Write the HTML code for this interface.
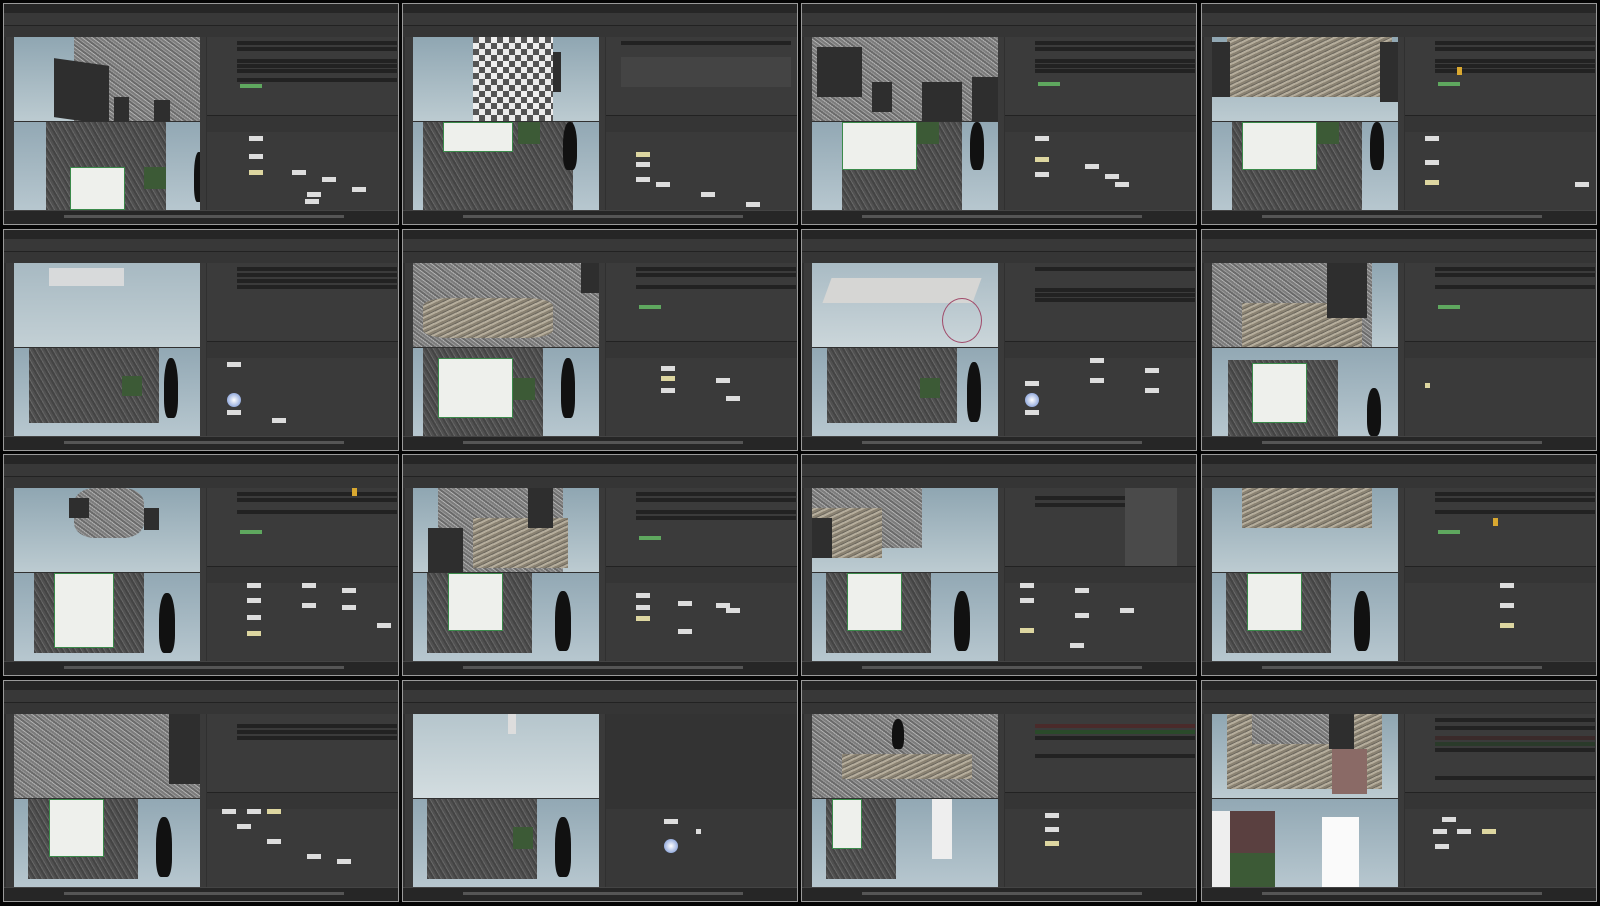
<!DOCTYPE html>
<html><head><meta charset="utf-8">
<style>
*{margin:0;padding:0;box-sizing:border-box}
body{width:1600px;height:906px;background:#050505;position:relative;overflow:hidden;font-family:"Liberation Sans",sans-serif;font-size:4px;color:#ccc}
.c{position:absolute;width:396px;height:222px;background:#303030;border:1px solid #9a9a9a;overflow:hidden}
.c>div{position:absolute}
.tt{left:0;top:0;width:100%;height:9px;background:#262626}
.mn{left:0;top:9px;width:100%;height:13px;background:#383838;border-bottom:1px solid #222}
.tb{left:0;top:22px;width:100%;height:11px;background:#353535}
.lt{left:2px;top:33px;width:8px;height:173px;background:#3a3a3a}
.rt{left:196px;top:33px;width:6px;height:173px;background:#3a3a3a}
.v1{left:10px;top:33px;width:186px;height:84px;background:linear-gradient(#8fa6b2,#bccbd1);overflow:hidden}
.v2{left:10px;top:118px;width:186px;height:88px;background:linear-gradient(#92a8b4,#b7c7cf);overflow:hidden}
.pp{left:203px;top:33px;width:193px;height:78px;background:#3b3b3b}
.nt{left:203px;top:111px;width:193px;height:17px;background:#353535;border-top:1px solid #222}
.ng{left:203px;top:128px;width:193px;height:78px;background:#3a3a3a}
.tl{left:0;top:206px;width:100%;height:16px;background:#262626;border-top:1px solid #444}
.tl:after{content:"";position:absolute;left:60px;top:4px;width:280px;height:3px;background:#555}
.c i{position:absolute;display:block}
.tx{background:repeating-linear-gradient(37deg,#6a6a6a 0 2px,#9a9a9a 2px 3px,#7c7c7c 3px 5px,#b0b0b0 5px 6px),#888}
.tx2{background:repeating-linear-gradient(-25deg,#8a8272 0 2px,#b5ad9c 2px 4px,#6f6a60 4px 5px),#999}
.dk{background:#2e2e2e}
.atl{background:repeating-linear-gradient(60deg,#444 0 2px,#666 2px 3px,#505050 3px 5px)}
.wh{background:#eef0ec;border:1px solid #3a8a4a}
.gr{background:#3c5a36}
.tree{background:#111;border-radius:45% 45% 30% 30%}
.f{background:#222;height:4px}
.n{background:#ddd;width:14px;height:5px}
.ny{background:#ddd6a0;width:14px;height:5px}
.g{background:#5fa85f;height:4px;width:22px}
</style></head><body>

<!-- template repeated -->
<!-- Row 1 -->
<div class="c" style="left:3px;top:3px">
<div class="tt"></div><div class="mn"></div><div class="tb"></div><div class="lt"></div><div class="rt"></div>
<div class="v1"><i class="tx" style="left:60px;top:0;width:126px;height:84px"></i><i class="dk" style="left:40px;top:25px;width:55px;height:59px;transform:skewY(8deg)"></i><i class="dk" style="left:100px;top:60px;width:15px;height:24px"></i><i class="dk" style="left:140px;top:63px;width:16px;height:21px"></i></div>
<div class="v2"><i class="atl" style="left:32px;top:0;width:120px;height:88px"></i><i class="wh" style="left:56px;top:45px;width:55px;height:43px"></i><i class="gr" style="left:130px;top:45px;width:22px;height:22px"></i><i class="tree" style="left:180px;top:30px;width:10px;height:50px"></i></div>
<div class="pp"><i class="f" style="left:30px;top:4px;width:160px"></i><i class="f" style="left:30px;top:10px;width:160px"></i><i class="f" style="left:30px;top:22px;width:160px"></i><i class="f" style="left:30px;top:27px;width:160px"></i><i class="f" style="left:30px;top:32px;width:160px"></i><i class="f" style="left:30px;top:41px;width:160px"></i><i class="g" style="left:33px;top:47px"></i></div>
<div class="nt"></div>
<div class="ng"><i class="n" style="left:42px;top:4px"></i><i class="n" style="left:42px;top:22px"></i><i class="ny" style="left:42px;top:38px"></i><i class="n" style="left:85px;top:38px"></i><i class="n" style="left:115px;top:45px"></i><i class="n" style="left:100px;top:60px"></i><i class="n" style="left:145px;top:55px"></i><i class="n" style="left:98px;top:67px"></i></div>
<div class="tl"></div></div>

<div class="c" style="left:402px;top:3px">
<div class="tt"></div><div class="mn"></div><div class="tb"></div><div class="lt"></div><div class="rt"></div>
<div class="v1"><i class="tx" style="left:60px;top:0;width:80px;height:84px;background:repeating-conic-gradient(#eee 0 25%,#555 0 50%) 0 0/12px 12px"></i><i class="dk" style="left:140px;top:15px;width:8px;height:40px"></i></div>
<div class="v2"><i class="atl" style="left:10px;top:0;width:150px;height:88px"></i><i class="wh" style="left:30px;top:0;width:70px;height:30px"></i><i class="gr" style="left:105px;top:0;width:22px;height:22px"></i><i class="tree" style="left:150px;top:0;width:14px;height:48px"></i></div>
<div class="pp"><i class="f" style="left:15px;top:4px;width:170px"></i><i class="f" style="left:15px;top:20px;width:170px;height:30px;background:#444"></i></div>
<div class="nt"></div>
<div class="ng"><i class="ny" style="left:30px;top:20px"></i><i class="n" style="left:30px;top:30px"></i><i class="n" style="left:30px;top:45px"></i><i class="n" style="left:50px;top:50px"></i><i class="n" style="left:95px;top:60px"></i><i class="n" style="left:140px;top:70px"></i></div>
<div class="tl"></div></div>

<div class="c" style="left:801px;top:3px">
<div class="tt"></div><div class="mn"></div><div class="tb"></div><div class="lt"></div><div class="rt"></div>
<div class="v1"><i class="tx" style="left:0;top:0;width:186px;height:84px"></i><i class="dk" style="left:5px;top:10px;width:45px;height:50px"></i><i class="dk" style="left:60px;top:45px;width:20px;height:30px"></i><i class="dk" style="left:110px;top:45px;width:40px;height:39px"></i><i class="dk" style="left:160px;top:40px;width:26px;height:44px"></i></div>
<div class="v2"><i class="atl" style="left:30px;top:0;width:120px;height:88px"></i><i class="wh" style="left:30px;top:0;width:75px;height:48px"></i><i class="gr" style="left:105px;top:0;width:22px;height:22px"></i><i class="tree" style="left:158px;top:0;width:14px;height:48px"></i></div>
<div class="pp"><i class="f" style="left:30px;top:4px;width:160px"></i><i class="f" style="left:30px;top:10px;width:160px"></i><i class="f" style="left:30px;top:22px;width:160px"></i><i class="f" style="left:30px;top:27px;width:160px"></i><i class="f" style="left:30px;top:32px;width:160px"></i><i class="g" style="left:33px;top:45px"></i></div>
<div class="nt"></div>
<div class="ng"><i class="n" style="left:30px;top:4px"></i><i class="ny" style="left:30px;top:25px"></i><i class="n" style="left:30px;top:40px"></i><i class="n" style="left:80px;top:32px"></i><i class="n" style="left:100px;top:42px"></i><i class="n" style="left:110px;top:50px"></i></div>
<div class="tl"></div></div>

<div class="c" style="left:1201px;top:3px">
<div class="tt"></div><div class="mn"></div><div class="tb"></div><div class="lt"></div><div class="rt"></div>
<div class="v1"><i class="tx2" style="left:15px;top:0;width:165px;height:60px"></i><i class="dk" style="left:0;top:5px;width:18px;height:55px"></i><i class="dk" style="left:168px;top:5px;width:18px;height:60px"></i></div>
<div class="v2"><i class="atl" style="left:20px;top:0;width:130px;height:88px"></i><i class="wh" style="left:30px;top:0;width:75px;height:48px"></i><i class="gr" style="left:105px;top:0;width:22px;height:22px"></i><i class="tree" style="left:158px;top:0;width:14px;height:48px"></i></div>
<div class="pp"><i class="f" style="left:30px;top:4px;width:160px"></i><i class="f" style="left:30px;top:10px;width:160px"></i><i class="f" style="left:30px;top:22px;width:160px"></i><i class="f" style="left:30px;top:27px;width:160px"></i><i class="f" style="left:30px;top:32px;width:160px"></i><i class="g" style="left:33px;top:45px"></i><i style="left:52px;top:30px;width:5px;height:8px;background:#d9a830"></i></div>
<div class="nt"></div>
<div class="ng"><i class="n" style="left:20px;top:4px"></i><i class="n" style="left:20px;top:28px"></i><i class="ny" style="left:20px;top:48px"></i><i class="n" style="left:170px;top:50px"></i></div>
<div class="tl"></div></div>

<!-- Row 2 -->
<div class="c" style="left:3px;top:229px">
<div class="tt"></div><div class="mn"></div><div class="tb"></div><div class="lt"></div><div class="rt"></div>
<div class="v1" style="background:linear-gradient(#a7b9c2,#c3d0d5)"><i style="left:35px;top:5px;width:75px;height:18px;background:#d8dadb"></i></div>
<div class="v2"><i class="atl" style="left:15px;top:0;width:130px;height:75px"></i><i class="gr" style="left:108px;top:28px;width:20px;height:20px"></i><i class="tree" style="left:150px;top:10px;width:14px;height:60px"></i></div>
<div class="pp"><i class="f" style="left:30px;top:4px;width:160px"></i><i class="f" style="left:30px;top:10px;width:160px"></i><i class="f" style="left:30px;top:16px;width:160px"></i><i class="f" style="left:30px;top:22px;width:160px"></i></div>
<div class="nt"></div>
<div class="ng"><i class="n" style="left:20px;top:4px"></i><i style="left:20px;top:35px;width:14px;height:14px;border-radius:50%;background:radial-gradient(#fff,#6a8ad0)"></i><i class="n" style="left:20px;top:52px"></i><i class="n" style="left:65px;top:60px"></i></div>
<div class="tl"></div></div>

<div class="c" style="left:402px;top:229px">
<div class="tt"></div><div class="mn"></div><div class="tb"></div><div class="lt"></div><div class="rt"></div>
<div class="v1"><i class="tx" style="left:0;top:0;width:186px;height:84px"></i><i class="tx2" style="left:10px;top:35px;width:130px;height:40px;border-radius:20%"></i><i class="dk" style="left:168px;top:0;width:18px;height:30px"></i></div>
<div class="v2"><i class="atl" style="left:10px;top:0;width:120px;height:88px"></i><i class="wh" style="left:25px;top:10px;width:75px;height:60px"></i><i class="gr" style="left:100px;top:30px;width:22px;height:22px"></i><i class="tree" style="left:148px;top:10px;width:14px;height:60px"></i></div>
<div class="pp"><i class="f" style="left:30px;top:4px;width:160px"></i><i class="f" style="left:30px;top:10px;width:160px"></i><i class="f" style="left:30px;top:22px;width:160px"></i><i class="g" style="left:33px;top:42px"></i></div>
<div class="nt"></div>
<div class="ng"><i class="n" style="left:55px;top:8px"></i><i class="ny" style="left:55px;top:18px"></i><i class="n" style="left:55px;top:30px"></i><i class="n" style="left:110px;top:20px"></i><i class="n" style="left:120px;top:38px"></i></div>
<div class="tl"></div></div>

<div class="c" style="left:801px;top:229px">
<div class="tt"></div><div class="mn"></div><div class="tb"></div><div class="lt"></div><div class="rt"></div>
<div class="v1" style="background:linear-gradient(#a9bbc4,#cbd6da)"><i style="left:15px;top:15px;width:150px;height:25px;background:#d6d6d4;transform:skewX(-20deg)"></i><i style="left:130px;top:35px;width:40px;height:45px;border:1px solid #a04a6a;border-radius:50%"></i></div>
<div class="v2"><i class="atl" style="left:15px;top:0;width:130px;height:75px"></i><i class="gr" style="left:108px;top:30px;width:20px;height:20px"></i><i class="tree" style="left:155px;top:14px;width:14px;height:60px"></i></div>
<div class="pp"><i class="f" style="left:30px;top:4px;width:160px"></i><i class="f" style="left:30px;top:25px;width:160px"></i><i class="f" style="left:30px;top:30px;width:160px"></i><i class="f" style="left:30px;top:35px;width:160px"></i></div>
<div class="nt"></div>
<div class="ng"><i class="n" style="left:20px;top:23px"></i><i style="left:20px;top:35px;width:14px;height:14px;border-radius:50%;background:radial-gradient(#fff,#6a8ad0)"></i><i class="n" style="left:20px;top:52px"></i><i class="n" style="left:85px;top:0"></i><i class="n" style="left:85px;top:20px"></i><i class="n" style="left:140px;top:10px"></i><i class="n" style="left:140px;top:30px"></i></div>
<div class="tl"></div></div>

<div class="c" style="left:1201px;top:229px">
<div class="tt"></div><div class="mn"></div><div class="tb"></div><div class="lt"></div><div class="rt"></div>
<div class="v1"><i class="tx" style="left:0;top:0;width:160px;height:84px"></i><i class="tx2" style="left:30px;top:40px;width:120px;height:44px"></i><i class="dk" style="left:115px;top:0;width:40px;height:55px"></i></div>
<div class="v2"><i class="atl" style="left:16px;top:12px;width:110px;height:76px"></i><i class="wh" style="left:40px;top:15px;width:55px;height:60px"></i><i class="tree" style="left:155px;top:40px;width:14px;height:48px"></i></div>
<div class="pp"><i class="f" style="left:30px;top:4px;width:160px"></i><i class="f" style="left:30px;top:10px;width:160px"></i><i class="f" style="left:30px;top:22px;width:160px"></i><i class="g" style="left:33px;top:42px"></i></div>
<div class="nt"></div>
<div class="ng"><i class="ny" style="left:20px;top:25px;width:5px"></i></div>
<div class="tl"></div></div>

<!-- Row 3 -->
<div class="c" style="left:3px;top:454px">
<div class="tt"></div><div class="mn"></div><div class="tb"></div><div class="lt"></div><div class="rt"></div>
<div class="v1"><i class="tx" style="left:60px;top:0;width:70px;height:50px;border-radius:30%"></i><i class="dk" style="left:55px;top:10px;width:20px;height:20px"></i><i class="dk" style="left:130px;top:20px;width:15px;height:22px"></i></div>
<div class="v2"><i class="atl" style="left:20px;top:0;width:110px;height:80px"></i><i class="wh" style="left:40px;top:0;width:60px;height:75px"></i><i class="tree" style="left:145px;top:20px;width:16px;height:60px"></i></div>
<div class="pp"><i class="f" style="left:30px;top:4px;width:160px"></i><i class="f" style="left:30px;top:10px;width:160px"></i><i class="f" style="left:30px;top:22px;width:160px"></i><i class="g" style="left:33px;top:42px"></i><i style="left:145px;top:0;width:5px;height:8px;background:#d9a830"></i></div>
<div class="nt"></div>
<div class="ng"><i class="n" style="left:40px;top:0"></i><i class="n" style="left:40px;top:15px"></i><i class="n" style="left:40px;top:32px"></i><i class="ny" style="left:40px;top:48px"></i><i class="n" style="left:95px;top:0"></i><i class="n" style="left:95px;top:20px"></i><i class="n" style="left:135px;top:5px"></i><i class="n" style="left:135px;top:22px"></i><i class="n" style="left:170px;top:40px"></i></div>
<div class="tl"></div></div>

<div class="c" style="left:402px;top:454px">
<div class="tt"></div><div class="mn"></div><div class="tb"></div><div class="lt"></div><div class="rt"></div>
<div class="v1"><i class="tx" style="left:25px;top:0;width:125px;height:84px"></i><i class="tx2" style="left:60px;top:30px;width:95px;height:50px"></i><i class="dk" style="left:115px;top:0;width:25px;height:40px"></i><i class="dk" style="left:15px;top:40px;width:35px;height:44px"></i></div>
<div class="v2"><i class="atl" style="left:14px;top:0;width:105px;height:80px"></i><i class="wh" style="left:35px;top:0;width:55px;height:58px"></i><i class="tree" style="left:142px;top:18px;width:16px;height:60px"></i></div>
<div class="pp"><i class="f" style="left:30px;top:4px;width:160px"></i><i class="f" style="left:30px;top:10px;width:160px"></i><i class="f" style="left:30px;top:22px;width:160px"></i><i class="f" style="left:30px;top:28px;width:160px"></i><i class="g" style="left:33px;top:48px"></i></div>
<div class="nt"></div>
<div class="ng"><i class="n" style="left:30px;top:10px"></i><i class="n" style="left:30px;top:22px"></i><i class="ny" style="left:30px;top:33px"></i><i class="n" style="left:72px;top:18px"></i><i class="n" style="left:110px;top:20px"></i><i class="n" style="left:120px;top:25px"></i><i class="n" style="left:72px;top:46px"></i></div>
<div class="tl"></div></div>

<div class="c" style="left:801px;top:454px">
<div class="tt"></div><div class="mn"></div><div class="tb"></div><div class="lt"></div><div class="rt"></div>
<div class="v1"><i class="tx" style="left:0;top:0;width:110px;height:60px"></i><i class="tx2" style="left:0;top:20px;width:70px;height:50px"></i><i class="dk" style="left:0;top:30px;width:20px;height:40px"></i></div>
<div class="v2"><i class="atl" style="left:14px;top:0;width:105px;height:80px"></i><i class="wh" style="left:35px;top:0;width:55px;height:58px"></i><i class="tree" style="left:142px;top:18px;width:16px;height:60px"></i></div>
<div class="pp"><i class="f" style="left:30px;top:8px;width:90px"></i><i class="f" style="left:30px;top:15px;width:90px"></i><i style="left:120px;top:0;width:52px;height:78px;background:#4a4a4a"></i></div>
<div class="nt"></div>
<div class="ng"><i class="n" style="left:15px;top:0"></i><i class="n" style="left:15px;top:15px"></i><i class="ny" style="left:15px;top:45px"></i><i class="n" style="left:70px;top:5px"></i><i class="n" style="left:70px;top:30px"></i><i class="n" style="left:115px;top:25px"></i><i class="n" style="left:65px;top:60px"></i></div>
<div class="tl"></div></div>

<div class="c" style="left:1201px;top:454px">
<div class="tt"></div><div class="mn"></div><div class="tb"></div><div class="lt"></div><div class="rt"></div>
<div class="v1"><i class="tx2" style="left:30px;top:0;width:130px;height:40px"></i></div>
<div class="v2"><i class="atl" style="left:14px;top:0;width:105px;height:80px"></i><i class="wh" style="left:35px;top:0;width:55px;height:58px"></i><i class="tree" style="left:142px;top:18px;width:16px;height:60px"></i></div>
<div class="pp"><i class="f" style="left:30px;top:4px;width:160px"></i><i class="f" style="left:30px;top:10px;width:160px"></i><i class="f" style="left:30px;top:22px;width:160px"></i><i class="g" style="left:33px;top:42px"></i><i style="left:88px;top:30px;width:5px;height:8px;background:#d9a830"></i></div>
<div class="nt"></div>
<div class="ng"><i class="n" style="left:95px;top:0"></i><i class="n" style="left:95px;top:20px"></i><i class="ny" style="left:95px;top:40px"></i></div>
<div class="tl"></div></div>

<!-- Row 4 -->
<div class="c" style="left:3px;top:680px">
<div class="tt"></div><div class="mn"></div><div class="tb"></div><div class="lt"></div><div class="rt"></div>
<div class="v1"><i class="tx" style="left:0;top:0;width:186px;height:84px"></i><i class="dk" style="left:155px;top:0;width:31px;height:70px"></i></div>
<div class="v2"><i class="atl" style="left:14px;top:0;width:110px;height:80px"></i><i class="wh" style="left:35px;top:0;width:55px;height:58px"></i><i class="tree" style="left:142px;top:18px;width:16px;height:60px"></i></div>
<div class="pp"><i class="f" style="left:30px;top:10px;width:160px"></i><i class="f" style="left:30px;top:16px;width:160px"></i><i class="f" style="left:30px;top:22px;width:160px"></i></div>
<div class="nt"></div>
<div class="ng"><i class="n" style="left:15px;top:0"></i><i class="n" style="left:40px;top:0"></i><i class="ny" style="left:60px;top:0"></i><i class="n" style="left:30px;top:15px"></i><i class="n" style="left:60px;top:30px"></i><i class="n" style="left:100px;top:45px"></i><i class="n" style="left:130px;top:50px"></i></div>
<div class="tl"></div></div>

<div class="c" style="left:402px;top:680px">
<div class="tt"></div><div class="mn"></div><div class="tb"></div><div class="lt"></div><div class="rt"></div>
<div class="v1" style="background:linear-gradient(#b5c5cc,#d3dde0)"><i style="left:95px;top:0;width:8px;height:20px;background:#ddd"></i></div>
<div class="v2"><i class="atl" style="left:14px;top:0;width:110px;height:80px"></i><i class="gr" style="left:100px;top:28px;width:20px;height:22px"></i><i class="tree" style="left:142px;top:18px;width:16px;height:60px"></i></div>
<div class="pp" style="background:#333"></div>
<div class="nt" style="background:#333;border:0"></div>
<div class="ng" style="background:#383838"><i class="n" style="left:58px;top:10px"></i><i class="n" style="left:90px;top:20px;width:5px"></i><i style="left:58px;top:30px;width:14px;height:14px;border-radius:50%;background:radial-gradient(#fff,#6a8ad0)"></i></div>
<div class="tl"></div></div>

<div class="c" style="left:801px;top:680px">
<div class="tt"></div><div class="mn"></div><div class="tb"></div><div class="lt"></div><div class="rt"></div>
<div class="v1"><i class="tx" style="left:0;top:0;width:186px;height:84px"></i><i class="tx2" style="left:30px;top:40px;width:130px;height:25px"></i><i class="tree" style="left:80px;top:5px;width:12px;height:30px"></i></div>
<div class="v2"><i class="atl" style="left:14px;top:0;width:70px;height:80px"></i><i class="wh" style="left:20px;top:0;width:30px;height:50px"></i><i style="left:120px;top:0;width:20px;height:60px;background:#eee"></i></div>
<div class="pp"><i class="f" style="left:30px;top:10px;width:160px;background:#4a2a2a"></i><i class="f" style="left:30px;top:16px;width:160px;background:#2a4a2a"></i><i class="f" style="left:30px;top:22px;width:160px"></i><i class="f" style="left:30px;top:40px;width:160px"></i></div>
<div class="nt"></div>
<div class="ng"><i class="n" style="left:40px;top:4px"></i><i class="n" style="left:40px;top:18px"></i><i class="ny" style="left:40px;top:32px"></i></div>
<div class="tl"></div></div>

<div class="c" style="left:1201px;top:680px">
<div class="tt"></div><div class="mn"></div><div class="tb"></div><div class="lt"></div><div class="rt"></div>
<div class="v1"><i class="tx2" style="left:15px;top:0;width:155px;height:75px"></i><i class="tx" style="left:40px;top:0;width:100px;height:30px"></i><i class="dk" style="left:117px;top:0;width:25px;height:35px"></i><i style="left:120px;top:35px;width:35px;height:45px;background:#8a6a66"></i></div>
<div class="v2"><i style="left:0;top:12px;width:23px;height:76px;background:#eee"></i><i style="left:18px;top:12px;width:45px;height:42px;background:#5a4040"></i><i class="gr" style="left:18px;top:54px;width:45px;height:34px"></i><i style="left:110px;top:18px;width:37px;height:70px;background:#fafafa"></i></div>
<div class="pp"><i class="f" style="left:30px;top:4px;width:160px"></i><i class="f" style="left:30px;top:12px;width:160px"></i><i class="f" style="left:30px;top:22px;width:160px;background:#3a2a2a"></i><i class="f" style="left:30px;top:28px;width:160px;background:#2a3a2a"></i><i class="f" style="left:30px;top:34px;width:160px"></i><i class="f" style="left:30px;top:62px;width:160px"></i></div>
<div class="nt"></div>
<div class="ng"><i class="n" style="left:37px;top:8px"></i><i class="n" style="left:28px;top:20px"></i><i class="n" style="left:52px;top:20px"></i><i class="ny" style="left:77px;top:20px"></i><i class="n" style="left:30px;top:35px"></i></div>
<div class="tl"></div></div>

</body></html>
